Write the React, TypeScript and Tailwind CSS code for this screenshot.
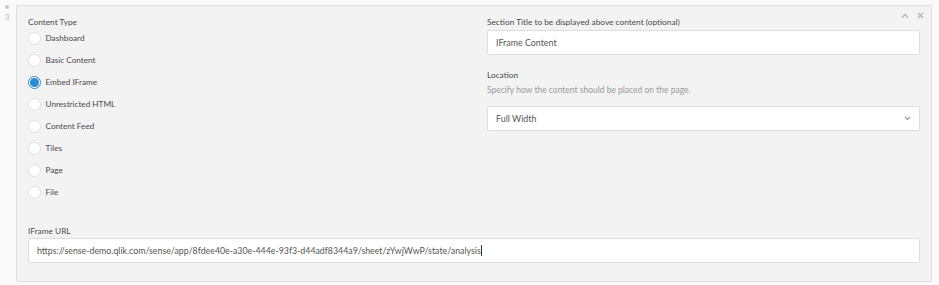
import React from "react";

const options = [
  "Dashboard",
  "Basic Content",
  "Embed IFrame",
  "Unrestricted HTML",
  "Content Feed",
  "Tiles",
  "Page",
  "File",
];

function Radio({ checked }: { checked: boolean }) {
  return checked ? (
    <span className="w-[13px] h-[13px] rounded-full border border-[#2a8ad4] bg-white flex items-center justify-center shrink-0">
      <span className="w-[9px] h-[9px] rounded-full bg-[#2a8ad4]" />
    </span>
  ) : (
    <span className="w-[13px] h-[13px] rounded-full border border-[#e0e0e0] bg-white shrink-0" />
  );
}

export default function App() {
  return (
    <div
      className="w-[939px] h-[285px] bg-[#fafafa] flex text-[#4a4a4a]"
      style={{ fontFamily: "Lato, 'Open Sans', sans-serif" }}
    >
      <div className="w-[16px] flex flex-col items-center pt-[5px]">
        <span className="w-[4px] h-[4px] rounded-full bg-[#c8c8c8] ml-[-3px]" />
        <span className="text-[8px] leading-[10px] text-[#bbb] ml-[-2px] mt-[3px]">3</span>
      </div>
      <div className="relative mt-[5px] w-[916px] h-[277px] bg-[#f3f3f3] border border-[#dedede] rounded-[2px] px-[11px] pt-[10px]">
        <div className="absolute right-[7px] top-[6px] flex items-center gap-[8px]">
          <svg width="8" height="6" viewBox="0 0 8 6" fill="none">
            <path d="M1 4.5 L4 1.5 L7 4.5" stroke="#b5b5b5" strokeWidth="1.4" />
          </svg>
          <svg width="7" height="7" viewBox="0 0 7 7" fill="none">
            <path d="M1 1 L6 6 M6 1 L1 6" stroke="#b5b5b5" strokeWidth="1.3" />
          </svg>
        </div>
        <div className="flex gap-[12px]">
          <div className="flex-1">
            <div className="text-[8.3px] leading-[12px] text-[#4a4a4a]">Content Type</div>
            <div className="flex flex-col mt-[-1px]">
              {options.map((o, i) => (
                <div key={o} className="flex items-center h-[22px] ml-[-0.5px]">
                  <Radio checked={i === 2} />
                  <span className="ml-[5px] text-[8.2px] text-[#4a4a4a]">{o}</span>
                </div>
              ))}
            </div>
          </div>
          <div className="w-[433px]">
            <div className="text-[8.3px] leading-[12px] text-[#4a4a4a]">
              Section Title to be displayed above content (optional)
            </div>
            <div className="mt-[2px] h-[25px] bg-white border border-[#dedede] rounded-[2px] flex items-center px-[8px] text-[8.9px] text-[#555]">
              IFrame Content
            </div>
            <div className="mt-[14px] text-[8.3px] leading-[12px] text-[#4a4a4a]">Location</div>
            <div className="mt-[3px] text-[8.5px] leading-[12px] text-[#9a9a9a]">
              Specify how the content should be placed on the page.
            </div>
            <div className="mt-[10px] h-[25px] bg-white border border-[#dedede] rounded-[2px] flex items-center justify-between px-[8px] text-[8.9px] text-[#555]">
              <span>Full Width</span>
              <svg width="7" height="5" viewBox="0 0 7 5" fill="none">
                <path d="M1 1 L3.5 3.5 L6 1" stroke="#999" strokeWidth="1.2" />
              </svg>
            </div>
          </div>
        </div>
        <div className="mt-[22px] text-[8.3px] leading-[12px] text-[#4a4a4a]">IFrame URL</div>
        <div className="mt-[1px] h-[25px] bg-white border border-[#dedede] rounded-[2px] flex items-center px-[8px] text-[8.8px] text-[#555]">
          <span>
            https://sense-demo.qlik.com/sense/app/8fdee40e-a30e-444e-93f3-d44adf8344a9/sheet/zYwjWwP/state/analysis
          </span>
          <span className="w-px h-[11px] bg-[#333]" />
        </div>
      </div>
    </div>
  );
}
